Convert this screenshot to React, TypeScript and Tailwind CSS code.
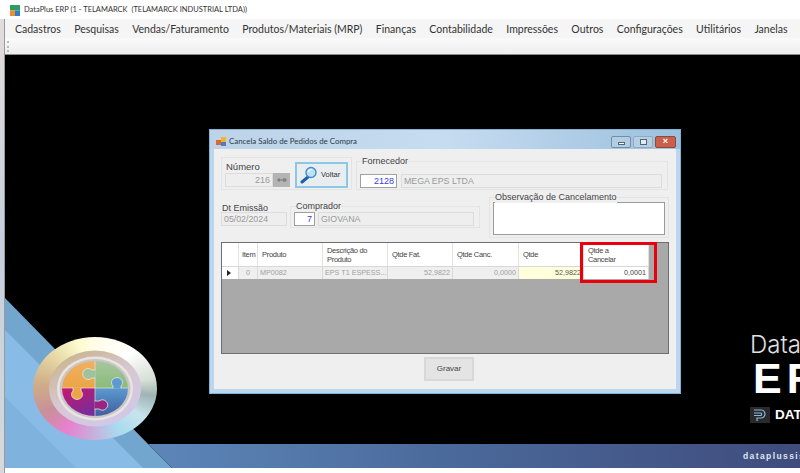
const menus = ["Cadastros", "Pesquisas", "Vendas/Faturamento", "Produtos/Materiais (MRP)", "Finanças", "Contabilidade", "Impressões", "Outros", "Configurações", "Utilitários", "Janelas"]

function Background() {
  return (
    <svg className="absolute inset-0" width="795" height="413" viewBox="5 55 795 413">
      <defs>
        <linearGradient id="band" x1="0" x2="1" y1="0" y2="0">
          <stop offset="0" stopColor="#5d86b8" />
          <stop offset="0.45" stopColor="#4b6a9c" />
          <stop offset="1" stopColor="#3f4c7c" />
        </linearGradient>
      </defs>
      <rect x="5" y="55" width="795" height="413" fill="#000" />
      <polygon points="5,298 148,444 172,468 5,468" fill="#72a6cf" />
      <polygon points="5,330 143,468 5,468" fill="#88bce6" />
      <polygon points="5,397 76,468 5,468" fill="#7fb2dc" />
      <polygon points="148,444 800,444 800,468 172,468" fill="url(#band)" />
    </svg>
  )
}

function PuzzleLogo() {
  return (
    <div className="absolute left-[28px] top-[282px] w-[124px] h-[103px] rounded-[50%] bg-[conic-gradient(#fffde8_0deg,#ffffff_45deg,#d8e0d8_80deg,#9fb4b4_97deg,#c8e4ec_120deg,#a8dcee_150deg,#cfa4d8_190deg,#e880d0_215deg,#c89098_245deg,#cfae88_275deg,#e8dca8_310deg,#fdfbd0_340deg,#fffde8_360deg)]">
      <svg width="124" height="103" viewBox="33 337 124 103">
        <defs>
          <linearGradient id="inner" x1="0.2" y1="0" x2="0.8" y2="1">
            <stop offset="0" stopColor="#c8b48e" />
            <stop offset="0.5" stopColor="#d8c8d4" />
            <stop offset="1" stopColor="#d0c8ec" />
          </linearGradient>
          <linearGradient id="pieceOrange" x1="0" y1="0" x2="0" y2="1">
            <stop offset="0" stopColor="#f0b060" />
            <stop offset="1" stopColor="#eca545" />
          </linearGradient>
          <linearGradient id="pieceGreen" x1="0" y1="0" x2="0" y2="1">
            <stop offset="0" stopColor="#a8c6a0" />
            <stop offset="1" stopColor="#88bc78" />
          </linearGradient>
          <linearGradient id="pieceRed" x1="0" y1="0" x2="0.5" y2="1">
            <stop offset="0" stopColor="#c8186c" />
            <stop offset="1" stopColor="#7d2a98" />
          </linearGradient>
          <linearGradient id="pieceBlue" x1="0" y1="0" x2="0" y2="1">
            <stop offset="0" stopColor="#5c9ad0" />
            <stop offset="1" stopColor="#3f5fa0" />
          </linearGradient>
          <clipPath id="puzzle">
            <ellipse cx="95" cy="388.5" rx="33" ry="27.5" />
          </clipPath>
        </defs>
        <ellipse cx="95" cy="388.5" rx="46" ry="38" fill="url(#inner)" />
        <ellipse cx="95" cy="388.5" rx="38" ry="32" fill="#e9e4e0" />
        <ellipse cx="95" cy="388.5" rx="35.5" ry="29.5" fill="#c9c5c8" />
        <g clipPath="url(#puzzle)">
          <rect x="62" y="361" width="33" height="27" fill="url(#pieceOrange)" />
          <rect x="95" y="361" width="33" height="27" fill="url(#pieceGreen)" />
          <rect x="62" y="388" width="33" height="28" fill="url(#pieceRed)" />
          <rect x="95" y="388" width="33" height="28" fill="url(#pieceBlue)" />
          <path d="M62 388H128M95 361V416" stroke="#e4e4e0" strokeWidth="0.7" />
          <path d="M95.4 370H92A5.5 5.5 0 1 0 92 378H95.4" fill="#a0c29a" stroke="#e8e8e0" strokeWidth="0.8" />
          <path d="M113 388.4V386A5.5 5 0 1 1 121 386V388.4" fill="#5c9ad0" stroke="#e8e8e0" strokeWidth="0.8" />
          <path d="M73 387.6V391A5.5 5 0 1 0 81 391V387.6" fill="#eca545" stroke="#e8e8e0" strokeWidth="0.8" />
          <path d="M94.6 401H99A5.5 5 0 1 1 99 409H94.6" fill="#9a2484" stroke="#e8e8e0" strokeWidth="0.8" />
        </g>
      </svg>
    </div>
  )
}

function Brand() {
  return (
    <div className="absolute left-[745px] top-[277px] w-[50px] overflow-hidden whitespace-nowrap text-white">
      <div className="text-[24px] leading-[26px] font-light text-[#e0e0e0] font-['Inter',sans-serif]">DataPlus</div>
      <div className="text-[43px] leading-[40px] font-bold ml-[3px] tracking-[5px] font-['Liberation_Sans',sans-serif]">ERP</div>
    </div>
  )
}

function SmallInput({ value, className }: { value: string; className: string }) {
  return (
    <div className={`h-[14px] border border-[#dcdcdc] bg-[#eeeeee] text-[#9a9a9a] text-[8.8px] leading-[12px] px-[2px] overflow-hidden whitespace-nowrap ${className}`}>
      {value}
    </div>
  )
}

function BlueInput({ value, className }: { value: string; className: string }) {
  return (
    <div className={`h-[14px] border border-[#a0a0a0] bg-white text-[#3b3bd8] text-[9px] leading-[12px] px-[2px] text-right ${className}`}>
      {value}
    </div>
  )
}

function Group({ label, className, children }: { label: string; className: string; children: React.ReactNode }) {
  return (
    <div className={`relative border border-[#e4e4e4] ${className}`}>
      <span className="absolute left-[5px] top-[-6px] bg-[#efefef] text-[9px] leading-[11px] text-[#444444] whitespace-nowrap">{label}</span>
      {children}
    </div>
  )
}

function HeaderCell({ children, className = "" }: { children?: React.ReactNode; className?: string }) {
  return (
    <div className={`border-r border-[#e2e2e2] bg-white pl-[4px] text-[7.5px] leading-[9px] tracking-[-0.3px] text-[#444444] flex items-center ${className}`}>
      <span>{children}</span>
    </div>
  )
}

function Cell({ children, className = "" }: { children?: React.ReactNode; className?: string }) {
  return (
    <div className={`border-r border-t border-[#d8d8d8] bg-[#efefef] px-[2px] text-[7.2px] leading-[12px] text-[#a0a0a0] whitespace-nowrap overflow-hidden ${className}`}>
      {children}
    </div>
  )
}

function Dialog() {
  return (
    <div className="absolute left-[209px] top-[129px] w-[472px] h-[265px] bg-[#bcd6ee] border border-[#7fb2d8] flex flex-col font-['Liberation_Sans',sans-serif]">
      <div className="h-[19px] shrink-0 bg-gradient-to-r from-[#bcd3e8] via-[#c6dcf0] to-[#9cc0de] flex items-center pl-[6px] pr-[4px] pt-[4px]">
        <svg width="11" height="11" viewBox="0 0 11 11">
          <rect x="0" y="4" width="5" height="5" fill="#d86a30" />
          <rect x="5" y="1" width="5" height="5" fill="#eeb52e" />
          <rect x="5" y="6" width="5" height="4" fill="#4d7cc0" />
        </svg>
        <span className="ml-[2px] text-[7.9px] text-[#2b3a4a] font-['Lato',sans-serif]">Cancela Saldo de Pedidos de Compra</span>
        <div className="ml-auto flex gap-[2px] items-center">
          <div className="w-[20px] h-[12px] rounded-[2px] border border-[#6f8eaa] bg-[#b5cde2] flex items-center justify-center">
            <div className="w-[7px] h-[3px] bg-white border border-[#51677c] mt-[3px]" />
          </div>
          <div className="w-[20px] h-[12px] rounded-[2px] border border-[#8fa9bf] bg-[#b8cfe3] flex items-center justify-center">
            <div className="w-[7px] h-[6px] border border-[#51677c] bg-white/60" />
          </div>
          <div className="w-[21px] h-[12px] rounded-[2px] border border-[#8c4a3e] bg-[#c9604c] flex items-center justify-center text-white text-[9px] leading-none font-bold">
            ×
          </div>
        </div>
      </div>
      <div className="mx-[4px] mb-[4px] flex-1 bg-[#efefef] relative px-[7px] flex flex-col">
        <div className="flex mt-[8px] h-[33px]">
          <div className="w-[131px] border border-[#e4e4e4] relative flex items-end pb-[2px] pl-[3px]">
            <span className="absolute left-[4px] top-[3px] text-[9.5px] leading-[12px] text-[#444444]">Número</span>
            <div className="h-[14px] w-[48px] border border-[#dcdcdc] bg-[#eeeeee] text-[#9a9a9a] text-[9px] leading-[12px] text-right px-[2px]">216</div>
            <div className="h-[14px] w-[17px] bg-[#b4b4b4] flex items-center justify-center">
              <svg width="10" height="6" viewBox="0 0 10 6">
                <path d="M0 3H10M2 1V5M6 2H9M6 4H9" stroke="#666666" strokeWidth="0.8" />
              </svg>
            </div>
            <button className="absolute left-[73px] top-[4px] w-[53px] h-[26px] border-2 border-[#8ec6e8] bg-[#e8edf0] flex items-center gap-[3px] pl-[3px] text-[7.5px] text-[#333333]">
              <svg width="18" height="18" viewBox="0 0 18 18">
                <path d="M8 11 L2 16" stroke="#1f5fb0" strokeWidth="3" strokeLinecap="round" />
                <circle cx="11" cy="6.5" r="5" fill="#bfe0f4" stroke="#3d8fd0" strokeWidth="1.4" />
                <path d="M8 6 Q9 3.5 12 3.5" stroke="#ffffff" strokeWidth="1.2" fill="none" />
              </svg>
              Voltar
            </button>
          </div>
          <Group label="Fornecedor" className="ml-[4px] w-[312px] mt-[4px] h-[29px] flex items-end gap-[4px] pl-[3px] pr-[5px] pb-[1px]">
            <BlueInput value="2128" className="w-[37px] shrink-0" />
            <SmallInput value="MEGA EPS LTDA" className="flex-1" />
          </Group>
        </div>
        <div className="flex mt-[7px] h-[41px]">
          <div className="w-[66px] mt-[6px]">
            <div className="text-[9px] leading-[10px] text-[#444444] ml-[1px]">Dt Emissão</div>
            <SmallInput value="05/02/2024" className="w-[66px] mt-[-1px]" />
          </div>
          <Group label="Comprador" className="ml-[3px] mt-[9px] w-[190px] h-[22px] flex items-end gap-[3px] pl-[3px] pr-[5px] pb-[1px]">
            <BlueInput value="7" className="w-[21px] shrink-0" />
            <SmallInput value="GIOVANA" className="flex-1" />
          </Group>
          <Group label="Observação de Cancelamento" className="ml-[9px] w-[180px] flex px-[3px] pt-[4px]">
            <div className="w-full h-[33px] border border-[#9a9a9a] bg-white" />
          </Group>
        </div>
        <div className="mt-[4px] h-[112px] bg-[#a9a9a9] border border-[#6e6e6e] relative">
          <div className="grid grid-cols-[17px_19px_65px_65px_65px_66px_65px_65px] grid-rows-[23px_13px]">
            <HeaderCell />
            <HeaderCell className="!pl-[3px]">Item</HeaderCell>
            <HeaderCell>Produto</HeaderCell>
            <HeaderCell>Descrição do Produto</HeaderCell>
            <HeaderCell>Qtde Fat.</HeaderCell>
            <HeaderCell>Qtde Canc.</HeaderCell>
            <HeaderCell>Qtde</HeaderCell>
            <HeaderCell>
              Qtde a
              <br />
              Cancelar
            </HeaderCell>
            <Cell className="!bg-white flex items-center pl-[5px]">
              <div className="w-0 h-0 border-y-[3px] border-y-transparent border-l-[4px] border-l-[#222222]" />
            </Cell>
            <Cell className="text-center">0</Cell>
            <Cell>MP0082</Cell>
            <Cell>EPS T1 ESPESS...</Cell>
            <Cell className="text-right">52,9822</Cell>
            <Cell className="text-right">0,0000</Cell>
            <Cell className="!bg-[#ffffdc] !text-[#555555] text-right">52,9822</Cell>
            <Cell className="!bg-white !text-[#444444] text-right">0,0001</Cell>
          </div>
          <div className="absolute left-[358px] top-[-1px] w-[77px] h-[41px] border-[3px] border-[#e8000c]" />
        </div>
        <button className="self-start ml-[203px] mt-[3px] w-[50px] h-[24px] border-2 border-[#d8d8d8] bg-[#e4e4e4] text-[8px] text-[#444444]">Gravar</button>
      </div>
    </div>
  )
}

export default function App() {
  return (
    <div className="relative w-[800px] h-[473px] overflow-hidden bg-white flex flex-col font-['Lato',sans-serif]">
      <div className="h-[19px] shrink-0 flex items-center pl-[10px] pt-[1px]">
        <svg width="10" height="11" viewBox="0 0 10 11">
          <rect x="0" y="0" width="10" height="5.5" fill="#2f9c62" />
          <rect x="0" y="5.5" width="5" height="5.5" fill="#ef8f2a" />
          <rect x="5" y="5.5" width="5" height="5.5" fill="#2f7fd0" />
        </svg>
        <span className="ml-[4px] text-[7.5px] text-[#333333] whitespace-pre">DataPlus ERP (1 - TELAMARCK  (TELAMARCK INDUSTRIAL LTDA))</span>
      </div>
      <div className="flex-1 flex min-h-0">
        <div className="w-[5px] shrink-0 bg-gradient-to-b from-[#e4dcdc] via-[#c4d0dc] to-[#d8d8d8] border-r border-[#9a9a9a]" />
        <div className="flex-1 flex flex-col min-w-0">
          <nav className="h-[19px] shrink-0 bg-[#f5f5f5] flex items-center gap-[13.4px] pl-[10px] pt-[2px] text-[10.5px] text-[#333333] whitespace-nowrap">
            {menus.map((m) => (
              <span key={m}>{m}</span>
            ))}
          </nav>
          <div className="h-[17px] shrink-0 bg-gradient-to-b from-[#fafafa] to-[#eeeeee] border-b border-[#8c8c8c] flex items-center pl-[2px]">
            <div className="h-[11px] border-l-2 border-dotted border-[#b8b8b8]" />
          </div>
          <div className="relative h-[413px] shrink-0">
            <Background />
            <PuzzleLogo />
            <Brand />
            <div className="absolute left-[745px] top-[350px] w-[50px] overflow-hidden flex items-center gap-[5px]">
              <div className="w-[20px] h-[16px] shrink-0 bg-[#2a2a2a] flex items-center justify-center">
                <svg width="14" height="13" viewBox="0 0 14 13">
                  <path d="M1 1H8A4 4 0 0 1 8 9H4V12M1 4H8A1.5 1.5 0 0 1 8 6.5H1" fill="none" stroke="#8ab6dc" strokeWidth="1.2" />
                </svg>
              </div>
              <span className="text-[13.5px] font-bold text-white font-['Liberation_Sans',sans-serif] whitespace-nowrap">DATAPLUS</span>
            </div>
            <div className="absolute left-[738px] top-[395px] text-[8.5px] font-bold tracking-[1.4px] text-[#dfe6f0] whitespace-nowrap font-['Liberation_Sans',sans-serif]">dataplussistemas.com.br</div>
          </div>
        </div>
      </div>
      <Dialog />
    </div>
  )
}
